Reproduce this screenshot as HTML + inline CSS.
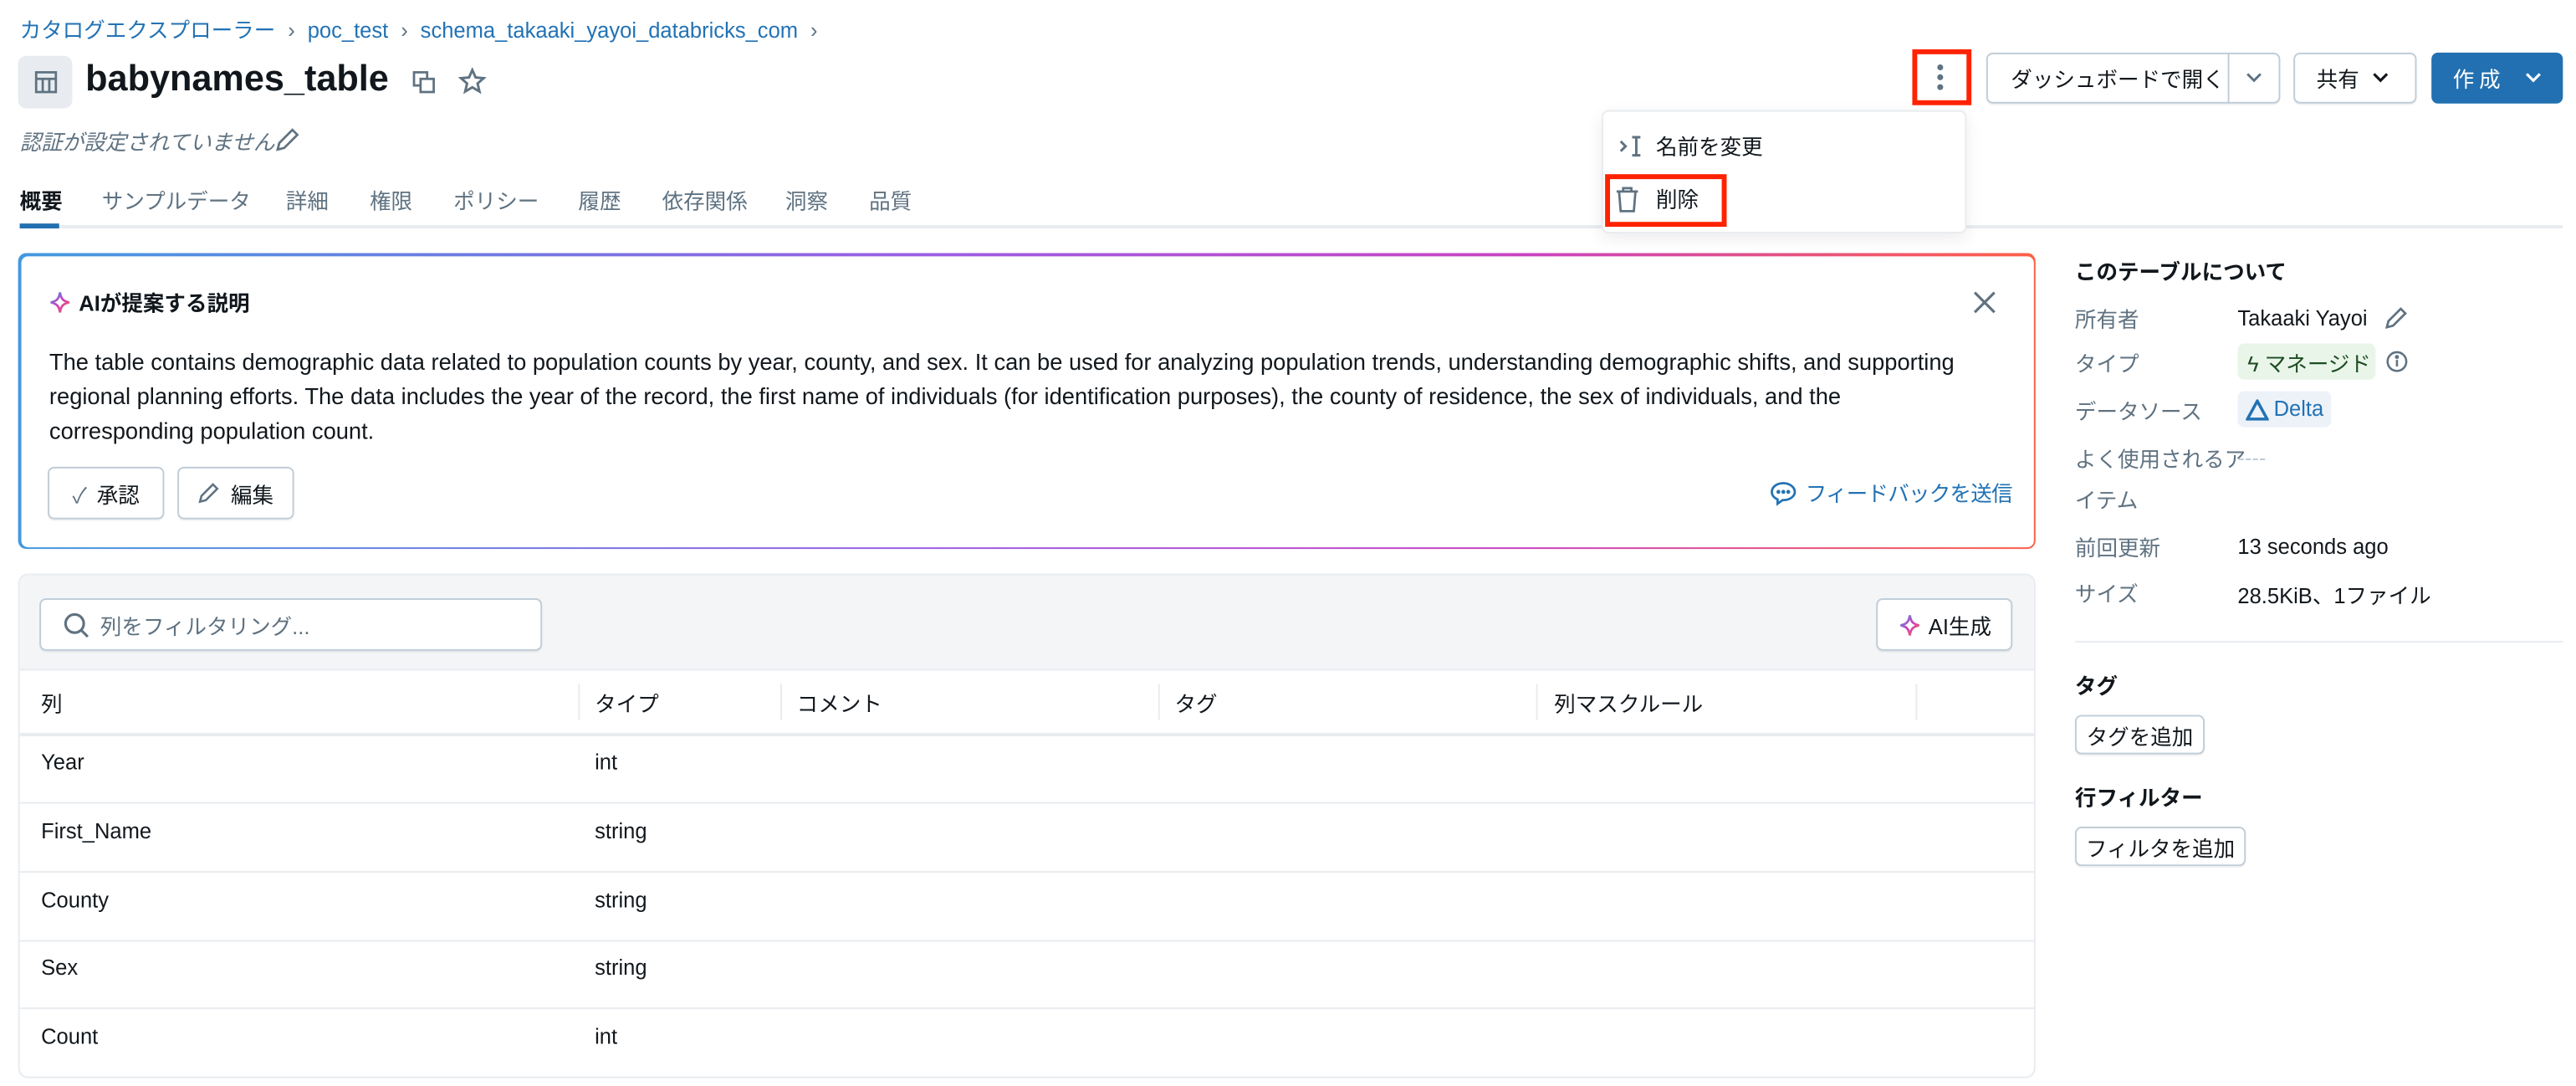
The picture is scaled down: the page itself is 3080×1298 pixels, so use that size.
<!DOCTYPE html>
<html><head><meta charset="utf-8"><style>
*{box-sizing:border-box;margin:0;padding:0}
html,body{width:3080px;height:1298px;overflow:hidden;background:#fff}
#w{position:absolute;left:0;top:0;width:1568px;height:661px;transform:scale(1.9643);transform-origin:0 0;font-family:"Liberation Sans","Noto Sans CJK JP",sans-serif;color:#11171c;font-size:13px}
.a{position:absolute;white-space:nowrap}
.blue{color:#2272b4}
.g{color:#5f7281}
.btn{position:absolute;border:1px solid #c0cdd8;border-radius:4px;background:#fff;display:flex;align-items:center;justify-content:center;font-size:13px;box-shadow:0 1px 0 rgba(0,0,0,.05)}
.vl{position:absolute;width:1px;background:#e8ecf0}
.hl{position:absolute;height:1px;background:#e8ecf0}
</style></head><body><div id="w">
<div class="a blue" style="left:12px;top:8px;font-size:13px">カタログエクスプローラー <span class="g" style="margin:0 4px">›</span> poc_test <span class="g" style="margin:0 4px">›</span> schema_takaaki_yayoi_databricks_com <span class="g" style="margin:0 4px">›</span></div>
<div class="a" style="left:11px;top:34px;width:33px;height:32px;background:#e8ecf0;border-radius:5px"></div>
<svg class="a" style="left:20px;top:42px" width="16" height="16" viewBox="0 0 16 16" fill="none" stroke="#5f7281" stroke-width="1.4"><rect x="2" y="2" width="12" height="12"/><path d="M2 6h12M6 6v8M10 6v8"/></svg>
<div class="a" style="left:52px;top:35px;font-size:22px;font-weight:bold">babynames_table</div>
<svg class="a" style="left:250px;top:42px" width="16" height="16" viewBox="0 0 16 16" fill="none" stroke="#5f7281" stroke-width="1.4"><rect x="2" y="2" width="8" height="8"/><rect x="6" y="6" width="8" height="8" fill="#fff"/></svg>
<svg class="a" style="left:279px;top:41px" width="17" height="17" viewBox="0 0 16 16" fill="none" stroke="#5f7281" stroke-width="1.4"><path d="M8 1.5l1.9 4.3 4.6.4-3.5 3 1.1 4.6L8 11.4l-4.1 2.4 1.1-4.6-3.5-3 4.6-.4z"/></svg>
<div class="a g" style="left:12px;top:76px;font-style:italic">認証が設定されていません</div>
<svg class="a" style="left:167px;top:77px" width="16" height="16" viewBox="0 0 16 16" fill="none" stroke="#5f7281" stroke-width="1.4"><path d="M11 2l3 3-8 8-4 1 1-4z"/></svg>
<!-- top right -->
<div class="a" style="left:1164px;top:30px;width:36px;height:34px;border:3px solid #ff2200"></div>
<svg class="a" style="left:1177px;top:38px" width="8" height="18"><circle cx="4" cy="3" r="1.8" fill="#5f7281"/><circle cx="4" cy="9" r="1.8" fill="#5f7281"/><circle cx="4" cy="15" r="1.8" fill="#5f7281"/></svg>
<div class="btn" style="left:1209px;top:32px;width:179px;height:31px;justify-content:flex-start;padding-left:14px">ダッシュボードで開く</div>
<div class="vl" style="left:1356px;top:32px;height:31px;background:#c0cdd8"></div>
<svg class="a" style="left:1366px;top:42px" width="12" height="10"><path d="M2 3l4 4 4-4" stroke="#5f7281" stroke-width="1.5" fill="none"/></svg>
<div class="btn" style="left:1396px;top:32px;width:75px;height:31px;justify-content:flex-start;padding-left:13px">共有</div>
<svg class="a" style="left:1443px;top:42px" width="12" height="10"><path d="M2 3l4 4 4-4" stroke="#11171c" stroke-width="1.6" fill="none"/></svg>
<div class="a" style="left:1480px;top:32px;width:80px;height:31px;background:#2270b1;border-radius:4px;color:#fff;padding:6px 0 0 13px;letter-spacing:3px">作成</div>
<svg class="a" style="left:1536px;top:42px" width="12" height="10"><path d="M2 3l4 4 4-4" stroke="#fff" stroke-width="1.6" fill="none"/></svg>
<!-- tabs -->
<div class="a" style="left:12px;top:112px;font-weight:bold">概要</div>
<div class="a g" style="left:62px;top:112px">サンプルデータ</div>
<div class="a g" style="left:174px;top:112px">詳細</div>
<div class="a g" style="left:225px;top:112px">権限</div>
<div class="a g" style="left:276px;top:112px">ポリシー</div>
<div class="a g" style="left:352px;top:112px">履歴</div>
<div class="a g" style="left:403px;top:112px">依存関係</div>
<div class="a g" style="left:478px;top:112px">洞察</div>
<div class="a g" style="left:529px;top:112px">品質</div>
<div class="hl" style="left:12px;top:137px;width:1548px;height:2px"></div>
<div class="a" style="left:12px;top:136px;width:24px;height:3px;background:#2270b1"></div>
<!-- AI card -->
<div class="a" style="left:11px;top:154px;width:1228px;height:180px;border-radius:5px;background:linear-gradient(90deg,#4299e0,#9b5de5 45%,#ca42c0 75%,#ff5f46);padding:1.5px"><div style="width:100%;height:100%;background:#fff;border-radius:4px"></div></div>
<svg class="a" style="left:29px;top:176px" width="15" height="16" viewBox="0 0 16 16"><defs><linearGradient id="sg" x1="0" y1="0" x2="1" y2="1"><stop offset="0" stop-color="#4299e0"/><stop offset=".5" stop-color="#ca42c0"/><stop offset="1" stop-color="#ff5f46"/></linearGradient></defs><path d="M8 1.5C8.6 5.5 10 7.2 14 8c-4 .8-5.4 2.5-6 6.5C7.4 10.5 6 8.8 2 8c4-.8 5.4-2.5 6-6.5z" fill="none" stroke="url(#sg)" stroke-width="1.5"/></svg>
<div class="a" style="left:48px;top:174px;font-weight:bold">AIが提案する説明</div>
<svg class="a" style="left:1201px;top:177px" width="14" height="14"><path d="M1 1l12 12M13 1L1 13" stroke="#5f7281" stroke-width="1.6"/></svg>
<div class="a" style="left:30px;top:210px;font-size:13.9px;line-height:21px;white-space:normal;width:1200px">The table contains demographic data related to population counts by year, county, and sex. It can be used for analyzing population trends, understanding demographic shifts, and supporting<br>regional planning efforts. The data includes the year of the record, the first name of individuals (for identification purposes), the county of residence, the sex of individuals, and the<br>corresponding population count.</div>
<div class="btn" style="left:29px;top:284px;width:71px;height:32px"><span style="color:#5f7281;margin-right:6px">✓</span>承認</div>
<div class="btn" style="left:108px;top:284px;width:71px;height:32px"><svg width="14" height="14" viewBox="0 0 16 16" style="margin-right:6px" fill="none" stroke="#5f7281" stroke-width="1.5"><path d="M11 2l3 3-8 8-4 1 1-4z"/></svg>編集</div>
<svg class="a" style="left:1077px;top:292px" width="17" height="16" viewBox="0 0 17 16" fill="none" stroke="#2272b4" stroke-width="1.4"><path d="M8.5 2C4.5 2 1.5 4.3 1.5 7.3c0 2.2 1.6 3.8 3.5 4.6L5 14.5l3-2.2h.5c4 0 7-2.3 7-5S12.5 2 8.5 2z"/><circle cx="5.5" cy="7.3" r=".5" fill="#2272b4"/><circle cx="8.5" cy="7.3" r=".5" fill="#2272b4"/><circle cx="11.5" cy="7.3" r=".5" fill="#2272b4"/></svg>
<div class="a blue" style="left:1099px;top:290px;letter-spacing:-0.4px">フィードバックを送信</div>
<!-- table -->
<div class="a" style="left:11px;top:349px;width:1228px;height:307px;border:1px solid #e8ecf0;border-radius:6px;background:#fff;overflow:hidden"><div style="height:58px;background:#f4f5f7;border-bottom:1px solid #e8ecf0"></div></div>
<div class="btn" style="left:24px;top:364px;width:306px;height:32px;justify-content:flex-start;padding-left:13px;color:#5f7281"><svg width="17" height="17" viewBox="0 0 16 16" fill="none" stroke="#5f7281" stroke-width="1.5" style="margin-right:6px"><circle cx="7" cy="7" r="5.2"/><path d="M11 11l3.5 3.5"/></svg>列をフィルタリング...</div>
<div class="btn" style="left:1142px;top:364px;width:83px;height:32px"><svg width="15" height="15" viewBox="0 0 16 16" style="margin-right:4px"><path d="M8 1.5C8.6 5.5 10 7.2 14 8c-4 .8-5.4 2.5-6 6.5C7.4 10.5 6 8.8 2 8c4-.8 5.4-2.5 6-6.5z" fill="none" stroke="url(#sg)" stroke-width="1.5"/></svg>AI生成</div>
<div class="vl" style="left:352px;top:416px;height:22px"></div>
<div class="vl" style="left:475px;top:416px;height:22px"></div>
<div class="vl" style="left:705px;top:416px;height:22px"></div>
<div class="vl" style="left:935px;top:416px;height:22px"></div>
<div class="vl" style="left:1166px;top:416px;height:22px"></div>
<div class="a" style="left:25px;top:418px">列</div>
<div class="a" style="left:362px;top:418px">タイプ</div>
<div class="a" style="left:485px;top:418px">コメント</div>
<div class="a" style="left:715px;top:418px">タグ</div>
<div class="a" style="left:946px;top:418px">列マスクルール</div>
<div class="hl" style="left:12px;top:446px;width:1226px;height:2px"></div>
<div class="hl" style="left:12px;top:488px;width:1226px"></div>
<div class="hl" style="left:12px;top:530px;width:1226px"></div>
<div class="hl" style="left:12px;top:572px;width:1226px"></div>
<div class="hl" style="left:12px;top:613px;width:1226px"></div>
<div class="a" style="left:25px;top:456px">Year</div><div class="a" style="left:362px;top:456px">int</div>
<div class="a" style="left:25px;top:498px">First_Name</div><div class="a" style="left:362px;top:498px">string</div>
<div class="a" style="left:25px;top:540px">County</div><div class="a" style="left:362px;top:540px">string</div>
<div class="a" style="left:25px;top:581px">Sex</div><div class="a" style="left:362px;top:581px">string</div>
<div class="a" style="left:25px;top:623px">Count</div><div class="a" style="left:362px;top:623px">int</div>
<!-- right panel -->
<div class="a" style="left:1263px;top:155px;font-weight:bold">このテーブルについて</div>
<div class="a g" style="left:1263px;top:184px">所有者</div><div class="a" style="left:1362px;top:186px">Takaaki Yayoi</div>
<svg class="a" style="left:1451px;top:186px" width="15" height="15" viewBox="0 0 16 16" fill="none" stroke="#5f7281" stroke-width="1.5"><path d="M11 2l3 3-8 8-4 1 1-4z"/></svg>
<div class="a g" style="left:1263px;top:211px">タイプ</div>
<div class="a" style="left:1362px;top:209px;width:84px;height:22px;background:#eaf5ea;border-radius:4px;color:#1d4d22;padding:2px 0 0 6px">ϟ マネージド</div>
<svg class="a" style="left:1452px;top:213px" width="14" height="14" viewBox="0 0 14 14" fill="none" stroke="#5f7281" stroke-width="1.3"><circle cx="7" cy="7" r="5.7"/><path d="M7 6v4"/><circle cx="7" cy="4.2" r=".6" fill="#5f7281"/></svg>
<div class="a g" style="left:1263px;top:240px">データソース</div>
<div class="a" style="left:1362px;top:238px;width:57px;height:22px;background:#edf2f9;border-radius:4px;color:#2272b4;padding:3px 0 0 22px">Delta</div>
<svg class="a" style="left:1367px;top:243px" width="14" height="13" viewBox="0 0 14 13"><path d="M7 1L1 12h12z" fill="none" stroke="#2272b4" stroke-width="1.8"/></svg>
<div class="a g" style="left:1263px;top:269px">よく使用されるア</div><div class="a" style="left:1362px;top:271px;color:#c0cdd8">----</div>
<div class="a g" style="left:1263px;top:294px">イテム</div>
<div class="a g" style="left:1263px;top:323px">前回更新</div><div class="a" style="left:1362px;top:325px">13 seconds ago</div>
<div class="a g" style="left:1263px;top:351px">サイズ</div><div class="a" style="left:1362px;top:352px">28.5KiB、1ファイル</div>
<div class="hl" style="left:1263px;top:390px;width:297px"></div>
<div class="a" style="left:1263px;top:407px;font-weight:bold">タグ</div>
<div class="btn" style="left:1263px;top:435px;width:79px;height:24px">タグを追加</div>
<div class="a" style="left:1263px;top:475px;font-weight:bold">行フィルター</div>
<div class="btn" style="left:1263px;top:503px;width:104px;height:24px">フィルタを追加</div>
<!-- menu -->
<div class="a" style="left:975px;top:67px;width:222px;height:75px;background:#fff;border:1px solid #e8ecf0;border-radius:4px;box-shadow:0 3px 10px rgba(0,0,0,.08)"></div>
<svg class="a" style="left:985px;top:82px" width="16" height="14" viewBox="0 0 16 14" fill="none" stroke="#5f7281" stroke-width="1.5"><path d="M1.5 4l3 3-3 3M8.5 1.5h5M8.5 12.5h5M11 1.5v11"/></svg>
<div class="a" style="left:1008px;top:79px">名前を変更</div>
<div class="a" style="left:977px;top:106px;width:74px;height:32px;border:3px solid #ff2200"></div>
<svg class="a" style="left:983px;top:113px" width="15" height="17" viewBox="0 0 15 17" fill="none" stroke="#5f7281" stroke-width="1.4"><path d="M1 3.5h13M5 3.5V1.5h5v2M2.5 3.5l1 12h8l1-12"/></svg>
<div class="a" style="left:1008px;top:111px">削除</div>
</div></body></html>
